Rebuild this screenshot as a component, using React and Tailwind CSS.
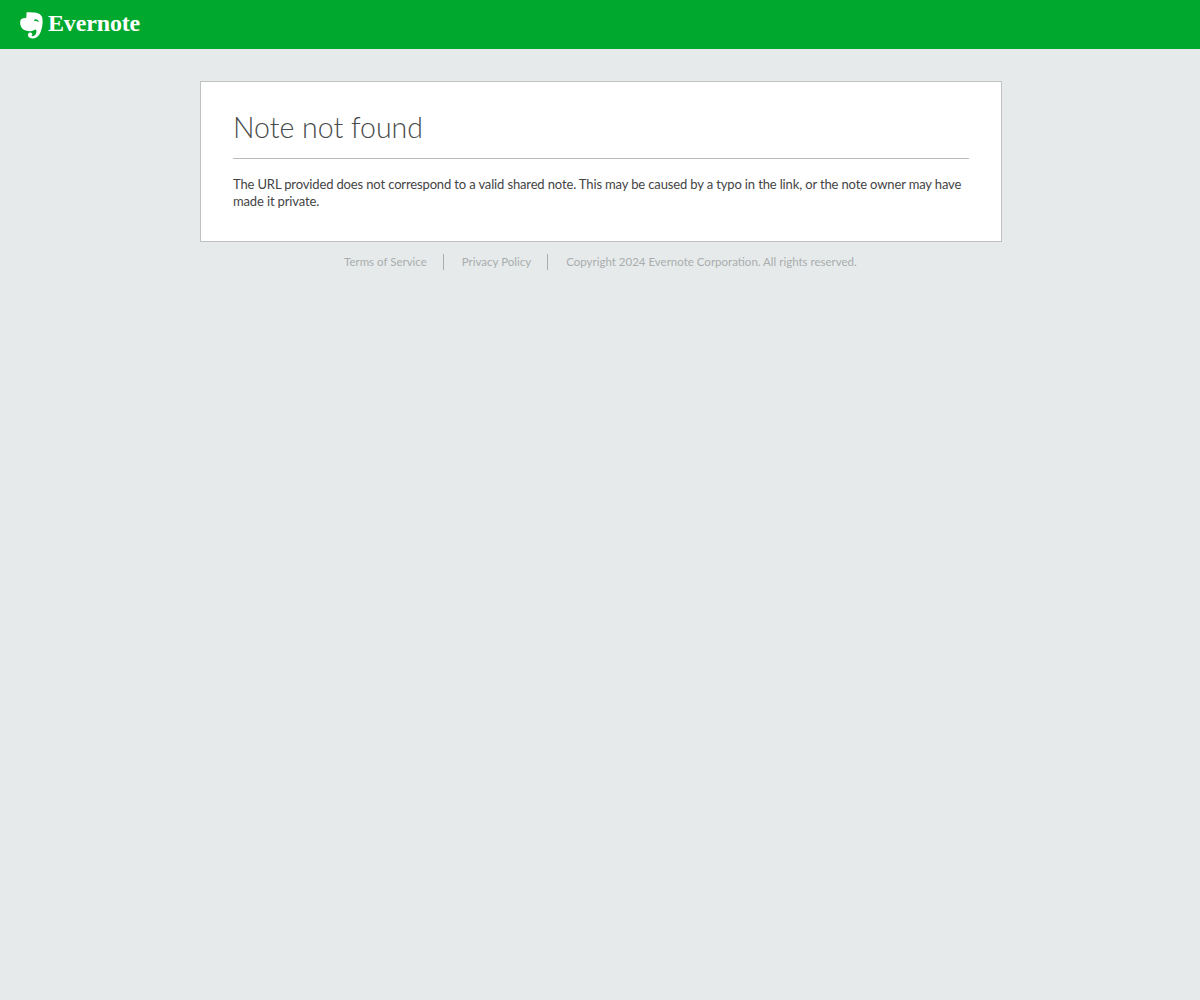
export default function App() {
  return (
    <div className="min-h-[1000px] bg-[#e6eaeb] font-['Lato',sans-serif]">
      <header className="h-[49px] bg-[#00a82d] flex items-center pl-5">
        <svg width="23" height="27" viewBox="0 0 23 27" className="mt-[1px]">
          <path fill="#fff" d="M6.5 0.5 C9 0 11 0.6 13 0.5 C17 0.4 21.5 1.8 22.3 6 C23 10 22.5 14 21.5 17 C20.5 21 18.5 26.5 12.5 26.5 C9.5 26.5 7.5 24.5 8 22.3 C8.4 20.6 10.6 20 11.8 21.2 C12.8 22.2 12.3 23.6 11.2 23.8 C12.5 24.8 15 24 16 21.5 C16.8 19.6 16.6 18 15.6 17.6 C14 18.2 12.3 19.2 10.5 19.2 C6 19.2 3.2 18 1.5 15.5 C0.2 13.5 0 11 0.3 9 C0.8 7.2 2 6.6 3.5 6.3 L5.5 6 C6.2 5.8 6.4 5.3 6.4 4.5 Z" />
          <path fill="#00a82d" d="M14.5 7.5 C16.5 6.8 18.6 7.8 18.8 10.2 C17.2 9 15.8 8.6 14.2 9.2 Z" />
          <path fill="#00a82d" d="M5.3 1.5 L5.3 4.6 C5.3 5 5 5.2 4.6 5.2 L1.6 5.2 Z" />
        </svg>
        <span className="ml-[5px] -mt-[3px] text-white font-['Liberation_Serif',serif] font-bold text-[24px] leading-none tracking-[-0.15px]">Evernote</span>
      </header>
      <main className="w-[802px] ml-[200px] mt-8 bg-white border border-[#bfc1c2] px-8 pt-[21px] pb-[31px]">
        <h1 className="text-[#484c4c] text-[28.5px] font-light leading-[48px] pb-[7px] border-b border-[#bbbbbb]">Note not found</h1>
        <p className="mt-[17px] text-[13px] leading-[17px] tracking-[-0.14px] text-[#444444]">The URL provided does not correspond to a valid shared note. This may be caused by a typo in the link, or the note owner may have made it private.</p>
      </main>
      <footer className="ml-[344px] mt-3 flex items-center text-[11.5px] leading-4 text-[#a9adad]">
        <a className="pr-4 border-r border-[#a9adad]">Terms of Service</a>
        <a className="pl-[18px] pr-4 border-r border-[#a9adad]">Privacy Policy</a>
        <span className="pl-[18px]">Copyright 2024 Evernote Corporation. All rights reserved.</span>
      </footer>
    </div>
  );
}
